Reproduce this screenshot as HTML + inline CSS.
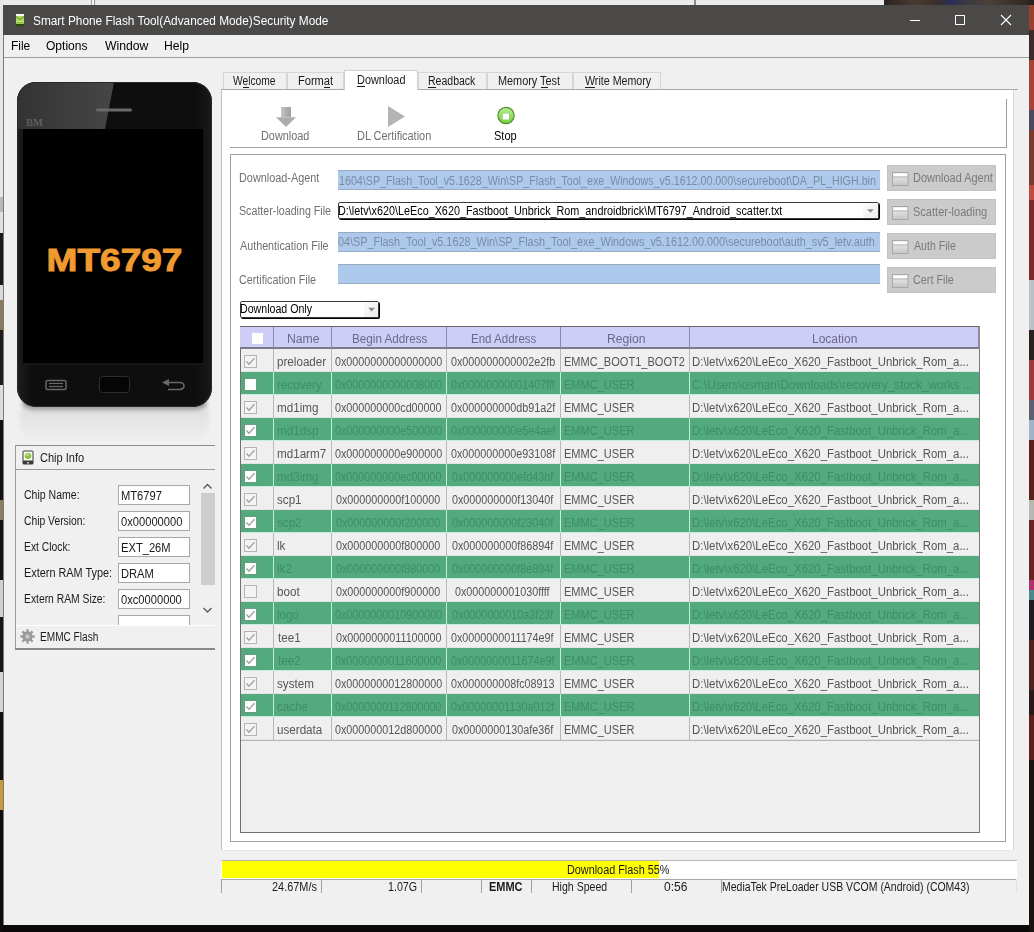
<!DOCTYPE html>
<html><head><meta charset="utf-8"><style>
html,body{margin:0;padding:0;width:1034px;height:932px;overflow:hidden;background:#000;}
body{position:relative;font-family:"Liberation Sans",sans-serif;}
.r{position:absolute;}
.t{position:absolute;white-space:nowrap;}
</style></head><body>
<div class="r" style="left:0px;top:0px;width:1034px;height:932px;background:#0a0808;"></div>
<div class="r" style="left:0px;top:0px;width:884px;height:5px;background:#ebebeb;"></div>
<div class="r" style="left:91px;top:0px;width:1px;height:5px;background:#a0a0a0;"></div>
<div class="r" style="left:92px;top:0px;width:2px;height:5px;background:#f8f8f8;"></div>
<div class="r" style="left:94px;top:0px;width:1px;height:5px;background:#909090;"></div>
<div class="r" style="left:694px;top:0px;width:2px;height:5px;background:#8a8a8a;"></div>
<div class="r" style="left:884px;top:0px;width:150px;height:5px;background:linear-gradient(90deg,#2a221e,#4a3a30 20%,#3a3028 35%,#28305a 45%,#3a3a40 55%,#4a4038 70%,#2a2420);"></div>
<div class="r" style="left:0px;top:0px;width:3px;height:197px;background:#e6e6e6;"></div>
<div class="r" style="left:0px;top:197px;width:3px;height:15px;background:#b8b8b8;"></div>
<div class="r" style="left:0px;top:212px;width:3px;height:21px;background:#e0e0e0;"></div>
<div class="r" style="left:0px;top:233px;width:3px;height:52px;background:#1a1a1a;"></div>
<div class="r" style="left:0px;top:285px;width:3px;height:15px;background:#d8d8d8;"></div>
<div class="r" style="left:0px;top:300px;width:3px;height:30px;background:#8a7a5a;"></div>
<div class="r" style="left:0px;top:330px;width:3px;height:55px;background:#201a18;"></div>
<div class="r" style="left:0px;top:385px;width:3px;height:35px;background:#dcdcdc;"></div>
<div class="r" style="left:0px;top:420px;width:3px;height:80px;background:#141010;"></div>
<div class="r" style="left:0px;top:500px;width:3px;height:20px;background:#8a8060;"></div>
<div class="r" style="left:0px;top:520px;width:3px;height:60px;background:#151212;"></div>
<div class="r" style="left:0px;top:580px;width:3px;height:37px;background:#d0d0d0;"></div>
<div class="r" style="left:0px;top:617px;width:3px;height:55px;background:#1a1616;"></div>
<div class="r" style="left:0px;top:672px;width:3px;height:40px;background:#d4d4d4;"></div>
<div class="r" style="left:0px;top:712px;width:3px;height:68px;background:#121010;"></div>
<div class="r" style="left:0px;top:780px;width:3px;height:30px;background:#c89a38;"></div>
<div class="r" style="left:0px;top:810px;width:3px;height:122px;background:#0e0c0c;"></div>
<div class="r" style="left:1029px;top:0px;width:5px;height:5px;background:#2a2020;"></div>
<div class="r" style="left:1029px;top:5px;width:5px;height:25px;background:#9a4030;"></div>
<div class="r" style="left:1029px;top:30px;width:5px;height:30px;background:#3a2a28;"></div>
<div class="r" style="left:1029px;top:60px;width:5px;height:50px;background:#a8403a;"></div>
<div class="r" style="left:1029px;top:110px;width:5px;height:20px;background:#4a4a58;"></div>
<div class="r" style="left:1029px;top:130px;width:5px;height:55px;background:#7a3a30;"></div>
<div class="r" style="left:1029px;top:185px;width:5px;height:15px;background:#c04a40;"></div>
<div class="r" style="left:1029px;top:200px;width:5px;height:80px;background:#7a2a2a;"></div>
<div class="r" style="left:1029px;top:280px;width:5px;height:50px;background:#b8c0c8;"></div>
<div class="r" style="left:1029px;top:330px;width:5px;height:30px;background:#2a2020;"></div>
<div class="r" style="left:1029px;top:360px;width:5px;height:40px;background:#9a3a3a;"></div>
<div class="r" style="left:1029px;top:400px;width:5px;height:20px;background:#5a6070;"></div>
<div class="r" style="left:1029px;top:420px;width:5px;height:20px;background:#a0b4c8;"></div>
<div class="r" style="left:1029px;top:440px;width:5px;height:60px;background:#5a2020;"></div>
<div class="r" style="left:1029px;top:500px;width:5px;height:20px;background:#b8b8b0;"></div>
<div class="r" style="left:1029px;top:520px;width:5px;height:60px;background:#6a2222;"></div>
<div class="r" style="left:1029px;top:580px;width:5px;height:10px;background:#b03068;"></div>
<div class="r" style="left:1029px;top:590px;width:5px;height:10px;background:#4a8a8a;"></div>
<div class="r" style="left:1029px;top:600px;width:5px;height:40px;background:#221a20;"></div>
<div class="r" style="left:1029px;top:640px;width:5px;height:50px;background:#4a2020;"></div>
<div class="r" style="left:1029px;top:690px;width:5px;height:25px;background:#2a1818;"></div>
<div class="r" style="left:1029px;top:715px;width:5px;height:45px;background:#5a2020;"></div>
<div class="r" style="left:1029px;top:760px;width:5px;height:172px;background:#1a1010;"></div>
<div class="r" style="left:3px;top:5px;width:1026px;height:920px;background:#f0f0f0;"></div>
<div class="r" style="left:3px;top:5px;width:1026px;height:30px;background:#4a4948;"></div>
<div class="r" style="left:3px;top:35px;width:1px;height:890px;background:#7a7a7a;"></div>
<svg class="r" style="left:15px;top:13px;width:11px;height:14px" viewBox="15 13 11 14"><rect x="16" y="22" width="8" height="4" fill="#2a4a08"/><rect x="16" y="14" width="8" height="10" fill="#a8d860"/><rect x="16" y="14" width="8" height="2" fill="#f4fff0"/><polyline points="16,16.5 20,19.5 24,16.5" fill="none" stroke="#7aa838" stroke-width="1.2"/><rect x="16" y="21" width="8" height="1" fill="#c4ec70"/><rect x="16" y="22.3" width="8" height="1" fill="#88b040"/></svg>
<div class="t" style="left:32.81px;top:14.54px;font-size:12px;line-height:12px;color:#ffffff;transform:scaleX(0.9873);transform-origin:0 0;">Smart Phone Flash Tool(Advanced Mode)Security Mode</div>
<svg class="r" style="left:900px;top:5px;width:129px;height:30px" viewBox="0 0 129 30"><line x1="10" y1="15.5" x2="20" y2="15.5" stroke="#fff" stroke-width="1"/><rect x="55.5" y="10.5" width="9" height="9" fill="none" stroke="#fff" stroke-width="1"/><line x1="101" y1="10" x2="111" y2="20" stroke="#fff" stroke-width="1.1"/><line x1="111" y1="10" x2="101" y2="20" stroke="#fff" stroke-width="1.1"/></svg>
<div class="t" style="left:11.44px;top:40.44px;font-size:12px;line-height:12px;color:#000;transform:scaleX(0.9955);transform-origin:0 0;">File</div>
<div class="t" style="left:46.42px;top:40.44px;font-size:12px;line-height:12px;color:#000;transform:scaleX(1.0035);transform-origin:0 0;">Options</div>
<div class="t" style="left:104.60px;top:40.44px;font-size:12px;line-height:12px;color:#000;transform:scaleX(1.0159);transform-origin:0 0;">Window</div>
<div class="t" style="left:164.03px;top:40.44px;font-size:12px;line-height:12px;color:#000;transform:scaleX(1.0137);transform-origin:0 0;">Help</div>
<div class="r" style="left:4px;top:57px;width:1025px;height:1px;background:#a0a0a0;"></div>
<svg class="r" style="left:10px;top:395px;width:210px;height:50px" viewBox="10 395 210 50"><defs><filter id="bl" x="-20%" y="-50%" width="140%" height="200%"><feGaussianBlur stdDeviation="2"/></filter><linearGradient id="rf" x1="0" y1="0" x2="0" y2="1"><stop offset="0" stop-color="#000" stop-opacity="0.07"/><stop offset="1" stop-color="#000" stop-opacity="0"/></linearGradient></defs><rect x="22" y="398" width="185" height="12" rx="12" fill="#000" opacity="0.35" filter="url(#bl)"/><path d="M20 410 H209 V420 Q209 442 187 442 H42 Q20 442 20 420 Z" fill="url(#rf)" filter="url(#bl)"/></svg>
<svg class="r" style="left:14px;top:78px;width:202px;height:336px" viewBox="14 78 202 336"><defs><linearGradient id="bd" x1="0" y1="0" x2="1" y2="0"><stop offset="0" stop-color="#1e1e1e"/><stop offset="0.08" stop-color="#0e0e0e"/><stop offset="0.92" stop-color="#0e0e0e"/><stop offset="1" stop-color="#1a1a1a"/></linearGradient><clipPath id="pc"><rect x="17" y="82" width="195" height="325" rx="19" ry="19"/></clipPath></defs><rect x="17" y="82" width="195" height="325" rx="19" ry="19" fill="url(#bd)"/><g clip-path="url(#pc)"><linearGradient id="gl" x1="0" y1="0" x2="1" y2="0"><stop offset="0" stop-color="#333"/><stop offset="1" stop-color="#464646"/></linearGradient><polygon points="17,82 114,82 105,129 17,129" fill="url(#gl)"/></g><rect x="17.5" y="82.5" width="194" height="324" rx="19" ry="19" fill="none" stroke="#2a2a2a" stroke-width="1"/><rect x="23" y="129" width="180" height="235" fill="#000"/><line x1="23" y1="364" x2="203" y2="364" stroke="#222" stroke-width="1"/><rect x="96" y="108.5" width="36" height="3" rx="1.5" fill="#6a6a6a"/><text x="26" y="126" font-family="Liberation Serif" font-size="10" font-weight="bold" fill="#5e5e5e" textLength="17" lengthAdjust="spacingAndGlyphs">BM</text><text x="46.5" y="271" font-family="Liberation Sans" font-weight="bold" font-size="31" fill="#f09a30" stroke="#f09a30" stroke-width="0.9" textLength="136" lengthAdjust="spacingAndGlyphs">MT6797</text><rect x="46" y="380.5" width="20" height="9" rx="1.5" fill="none" stroke="#6a6a6a" stroke-width="1.4"/><line x1="49" y1="383.5" x2="63" y2="383.5" stroke="#6a6a6a" stroke-width="1.2"/><line x1="49" y1="386.5" x2="63" y2="386.5" stroke="#6a6a6a" stroke-width="1.2"/><rect x="99.5" y="376.5" width="30" height="16" rx="3" fill="#050505" stroke="#2e2e2e" stroke-width="1"/><path d="M168 382.5 H180 a4 3.5 0 0 1 0 7 H168" fill="none" stroke="#6a6a6a" stroke-width="1.6"/><polygon points="162,382.5 169,379 169,386" fill="#6a6a6a"/></svg>
<div class="r" style="left:15px;top:445px;width:200px;height:1px;background:#8a8a8a;"></div>
<div class="r" style="left:15px;top:445px;width:1px;height:204px;background:#9a9a9a;"></div>
<div class="r" style="left:16px;top:469px;width:199px;height:1px;background:#9a9a9a;"></div>
<div class="r" style="left:16px;top:625px;width:199px;height:1px;background:#ffffff;"></div>
<div class="r" style="left:15px;top:648px;width:200px;height:2px;background:#8a8a8a;"></div>
<svg class="r" style="left:22px;top:450px;width:12px;height:15px" viewBox="0 0 12 15"><rect x="0.5" y="0.5" width="11" height="14" rx="1.5" fill="#3a3a3a"/><rect x="1.5" y="1.5" width="9" height="9" fill="#f4fff0"/><ellipse cx="6" cy="6" rx="3.3" ry="3" fill="#8cc040"/><ellipse cx="5.5" cy="5" rx="1.8" ry="1.4" fill="#b0dc70"/><rect x="5" y="12" width="2" height="1.5" fill="#ccc"/></svg>
<div class="t" style="left:40.20px;top:451.64px;font-size:12px;line-height:12px;color:#1a1a1a;transform:scaleX(0.9194);transform-origin:0 0;">Chip Info</div>
<div class="t" style="left:24.07px;top:488.84px;font-size:12px;line-height:12px;color:#1a1a1a;transform:scaleX(0.8771);transform-origin:0 0;">Chip Name:</div>
<div class="r" style="left:118px;top:485px;width:72px;height:20px;background:#fff;border:1px solid #a8a8a8;box-sizing:border-box;"></div>
<div class="t" style="left:120.61px;top:489.54px;font-size:12px;line-height:12px;color:#1a1a1a;transform:scaleX(0.9300);transform-origin:0 0;">MT6797</div>
<div class="t" style="left:24.08px;top:514.94px;font-size:12px;line-height:12px;color:#1a1a1a;transform:scaleX(0.8600);transform-origin:0 0;">Chip Version:</div>
<div class="r" style="left:118px;top:511px;width:72px;height:20px;background:#fff;border:1px solid #a8a8a8;box-sizing:border-box;"></div>
<div class="t" style="left:121.05px;top:515.64px;font-size:12px;line-height:12px;color:#1a1a1a;transform:scaleX(0.9300);transform-origin:0 0;">0x00000000</div>
<div class="t" style="left:23.77px;top:541.04px;font-size:12px;line-height:12px;color:#1a1a1a;transform:scaleX(0.8600);transform-origin:0 0;">Ext Clock:</div>
<div class="r" style="left:118px;top:537px;width:72px;height:20px;background:#fff;border:1px solid #a8a8a8;box-sizing:border-box;"></div>
<div class="t" style="left:120.61px;top:541.74px;font-size:12px;line-height:12px;color:#1a1a1a;transform:scaleX(0.9300);transform-origin:0 0;">EXT_26M</div>
<div class="t" style="left:23.73px;top:567.14px;font-size:12px;line-height:12px;color:#1a1a1a;transform:scaleX(0.9069);transform-origin:0 0;">Extern RAM Type:</div>
<div class="r" style="left:118px;top:563px;width:72px;height:20px;background:#fff;border:1px solid #a8a8a8;box-sizing:border-box;"></div>
<div class="t" style="left:120.61px;top:567.84px;font-size:12px;line-height:12px;color:#1a1a1a;transform:scaleX(0.9300);transform-origin:0 0;">DRAM</div>
<div class="t" style="left:23.77px;top:593.24px;font-size:12px;line-height:12px;color:#1a1a1a;transform:scaleX(0.8600);transform-origin:0 0;">Extern RAM Size:</div>
<div class="r" style="left:118px;top:589px;width:72px;height:20px;background:#fff;border:1px solid #a8a8a8;box-sizing:border-box;"></div>
<div class="t" style="left:121.05px;top:593.94px;font-size:12px;line-height:12px;color:#1a1a1a;transform:scaleX(0.9300);transform-origin:0 0;">0xc0000000</div>
<div class="r" style="left:118px;top:615px;width:72px;height:10px;background:#fff;border:1px solid #a8a8a8;border-bottom:none;box-sizing:border-box;"></div>
<div class="r" style="left:200px;top:477px;width:15px;height:148px;background:#f0f0f0;"></div>
<div class="r" style="left:200.5px;top:493px;width:14px;height:92px;background:#cdcdcd;"></div>
<svg class="r" style="left:200px;top:478px;width:15px;height:140px" viewBox="0 0 15 140"><polyline points="3.5,10.5 7.5,6.5 11.5,10.5" fill="none" stroke="#606060" stroke-width="1.5"/><polyline points="3.5,130 7.5,134 11.5,130" fill="none" stroke="#606060" stroke-width="1.5"/></svg>
<svg class="r" style="left:20px;top:629px;width:15px;height:15px" viewBox="0 0 15 15"><g fill="#9a9a9a"><circle cx="7.5" cy="7.5" r="5"/><rect x="6.3" y="0.3" width="2.4" height="3.5" transform="rotate(0 7.5 7.5)"/><rect x="6.3" y="0.3" width="2.4" height="3.5" transform="rotate(45 7.5 7.5)"/><rect x="6.3" y="0.3" width="2.4" height="3.5" transform="rotate(90 7.5 7.5)"/><rect x="6.3" y="0.3" width="2.4" height="3.5" transform="rotate(135 7.5 7.5)"/><rect x="6.3" y="0.3" width="2.4" height="3.5" transform="rotate(180 7.5 7.5)"/><rect x="6.3" y="0.3" width="2.4" height="3.5" transform="rotate(225 7.5 7.5)"/><rect x="6.3" y="0.3" width="2.4" height="3.5" transform="rotate(270 7.5 7.5)"/><rect x="6.3" y="0.3" width="2.4" height="3.5" transform="rotate(315 7.5 7.5)"/></g><circle cx="7.5" cy="7.5" r="2.2" fill="#c8c8c8"/></svg>
<div class="t" style="left:39.69px;top:630.64px;font-size:12px;line-height:12px;color:#1a1a1a;transform:scaleX(0.8407);transform-origin:0 0;">EMMC Flash</div>
<div class="r" style="left:221px;top:89px;width:793px;height:762px;background:#ffffff;"></div>
<div class="r" style="left:221px;top:89px;width:1px;height:762px;background:#c0c0c0;"></div>
<div class="r" style="left:1013px;top:89px;width:1px;height:762px;background:#d8d8d8;"></div>
<div class="r" style="left:221px;top:850px;width:793px;height:1px;background:#e8e8e8;"></div>
<div class="r" style="left:221px;top:89px;width:797px;height:1px;background:#a8a8a8;"></div>
<div class="r" style="left:223px;top:72px;width:64px;height:17px;background:#f0f0f0;border:1px solid #d6d6d6;border-bottom:none;box-sizing:border-box;"></div>
<div class="t" style="left:233.00px;top:75.24px;font-size:12px;line-height:12px;color:#1a1a1a;transform:scaleX(0.8537);transform-origin:0 0;">Welcome</div>
<div class="r" style="left:243px;top:87px;width:6px;height:1px;background:#1a1a1a;"></div>
<div class="r" style="left:287px;top:72px;width:57px;height:17px;background:#f0f0f0;border:1px solid #d6d6d6;border-bottom:none;box-sizing:border-box;"></div>
<div class="t" style="left:298.41px;top:75.24px;font-size:12px;line-height:12px;color:#1a1a1a;transform:scaleX(0.9226);transform-origin:0 0;">Format</div>
<div class="r" style="left:324px;top:87px;width:6px;height:1px;background:#1a1a1a;"></div>
<div class="r" style="left:344px;top:70px;width:74px;height:20px;background:#fff;border:1px solid #d0d0d0;border-bottom:none;box-sizing:border-box;"></div>
<div class="t" style="left:356.53px;top:74.24px;font-size:12px;line-height:12px;color:#1a1a1a;transform:scaleX(0.9089);transform-origin:0 0;">Download</div>
<div class="r" style="left:357px;top:86px;width:8px;height:1px;background:#1a1a1a;"></div>
<div class="r" style="left:418px;top:72px;width:69px;height:17px;background:#f0f0f0;border:1px solid #d6d6d6;border-bottom:none;box-sizing:border-box;"></div>
<div class="t" style="left:428.06px;top:75.24px;font-size:12px;line-height:12px;color:#1a1a1a;transform:scaleX(0.8767);transform-origin:0 0;">Readback</div>
<div class="r" style="left:428px;top:87px;width:8px;height:1px;background:#1a1a1a;"></div>
<div class="r" style="left:487px;top:72px;width:86px;height:17px;background:#f0f0f0;border:1px solid #d6d6d6;border-bottom:none;box-sizing:border-box;"></div>
<div class="t" style="left:498.43px;top:75.24px;font-size:12px;line-height:12px;color:#1a1a1a;transform:scaleX(0.9060);transform-origin:0 0;">Memory Test</div>
<div class="r" style="left:541px;top:87px;width:7px;height:1px;background:#1a1a1a;"></div>
<div class="r" style="left:573px;top:72px;width:88px;height:17px;background:#f0f0f0;border:1px solid #d6d6d6;border-bottom:none;box-sizing:border-box;"></div>
<div class="t" style="left:584.80px;top:75.24px;font-size:12px;line-height:12px;color:#1a1a1a;transform:scaleX(0.8884);transform-origin:0 0;">Write Memory</div>
<div class="r" style="left:585px;top:87px;width:10px;height:1px;background:#1a1a1a;"></div>
<div class="r" style="left:230px;top:147px;width:777px;height:1px;background:#a0a0a0;"></div>
<div class="r" style="left:1006px;top:99px;width:1px;height:49px;background:#a0a0a0;"></div>
<svg class="r" style="left:270px;top:100px;width:260px;height:30px" viewBox="270 100 260 30"><defs><linearGradient id="ag" x1="0" y1="0" x2="1" y2="0"><stop offset="0" stop-color="#c8c8c8"/><stop offset="0.5" stop-color="#b0b0b0"/><stop offset="1" stop-color="#a0a0a0"/></linearGradient></defs><rect x="281" y="107" width="10" height="10" fill="url(#ag)"/><polygon points="276,117.3 296,117.3 286,127" fill="#acacac"/><polygon points="388,106 405,116.5 388,127" fill="#b4b4b4"/><linearGradient id="sg" x1="0" y1="0" x2="0" y2="1"><stop offset="0" stop-color="#b4ec90"/><stop offset="1" stop-color="#7cd040"/></linearGradient><circle cx="506" cy="115.5" r="8.7" fill="#4a8e2a"/><circle cx="506" cy="115.5" r="7.6" fill="url(#sg)"/><rect x="502.3" y="113" width="7.2" height="6.8" fill="#4a8e2a" opacity="0.5"/><rect x="502.6" y="113.4" width="6.6" height="6.2" fill="#ffffff"/></svg>
<div class="t" style="left:260.53px;top:130.34px;font-size:12px;line-height:12px;color:#707070;transform:scaleX(0.9070);transform-origin:0 0;">Download</div>
<div class="t" style="left:357.43px;top:130.44px;font-size:12px;line-height:12px;color:#707070;transform:scaleX(0.9098);transform-origin:0 0;">DL Certification</div>
<div class="t" style="left:494.05px;top:129.84px;font-size:12px;line-height:12px;color:#000000;transform:scaleX(0.9179);transform-origin:0 0;">Stop</div>
<div class="r" style="left:230px;top:154px;width:776px;height:1px;background:#a0a0a0;"></div>
<div class="r" style="left:230px;top:154px;width:1px;height:687px;background:#a0a0a0;"></div>
<div class="r" style="left:1005px;top:154px;width:1px;height:687px;background:#a0a0a0;"></div>
<div class="r" style="left:230px;top:841px;width:776px;height:1px;background:#a0a0a0;"></div>
<div class="t" style="left:239.13px;top:171.74px;font-size:12px;line-height:12px;color:#707070;transform:scaleX(0.9052);transform-origin:0 0;">Download-Agent</div>
<div class="t" style="left:239.47px;top:205.44px;font-size:12px;line-height:12px;color:#707070;transform:scaleX(0.8901);transform-origin:0 0;">Scatter-loading File</div>
<div class="t" style="left:240.00px;top:239.54px;font-size:12px;line-height:12px;color:#707070;transform:scaleX(0.8965);transform-origin:0 0;">Authentication File</div>
<div class="t" style="left:239.46px;top:273.84px;font-size:12px;line-height:12px;color:#707070;transform:scaleX(0.8958);transform-origin:0 0;">Certification File</div>
<div class="r" style="left:338px;top:170px;width:542px;height:20px;background:#adcaec;border-top:1px solid #9aaac0;border-bottom:1px solid #9aaac0;box-sizing:border-box;"></div>
<div class="r" style="left:338px;top:232px;width:542px;height:20px;background:#adcaec;border-top:1px solid #9aaac0;border-bottom:1px solid #9aaac0;box-sizing:border-box;"></div>
<div class="r" style="left:338px;top:264px;width:542px;height:20px;background:#adcaec;border-top:1px solid #9aaac0;border-bottom:1px solid #9aaac0;box-sizing:border-box;"></div>
<div class="r" style="left:338px;top:170px;width:542px;height:20px;overflow:hidden">
<div class="t" style="left:1.35px;top:4.74px;font-size:12px;line-height:12px;color:#7a8ca4;transform:scaleX(0.8913);transform-origin:0 0;">1604\SP_Flash_Tool_v5.1628_Win\SP_Flash_Tool_exe_Windows_v5.1612.00.000\secureboot\DA_PL_HIGH.bin</div>
</div>
<div class="r" style="left:338px;top:232px;width:542px;height:20px;overflow:hidden">
<div class="t" style="left:-0.43px;top:4.34px;font-size:12px;line-height:12px;color:#7a8ca4;transform:scaleX(0.9024);transform-origin:0 0;">04\SP_Flash_Tool_v5.1628_Win\SP_Flash_Tool_exe_Windows_v5.1612.00.000\secureboot\auth_sv5_letv.auth</div>
</div>
<div class="r" style="left:338px;top:202px;width:541px;height:17px;background:#fff;border:1px solid #3a3a3a;border-radius:2px;box-sizing:border-box;box-shadow:1px 1px 0 #000;"></div>
<div class="r" style="left:863px;top:203px;width:15px;height:15px;background:linear-gradient(135deg,#fcfcfc,#ececec);"></div>
<svg class="r" style="left:863px;top:203px;width:15px;height:15px" viewBox="0 0 15 15"><polygon points="4,6.2 10.8,6.2 7.4,9.8" fill="#8a8a8a"/></svg>
<div class="r" style="left:339px;top:203px;width:522px;height:16px;overflow:hidden">
<div class="t" style="left:-0.86px;top:1.84px;font-size:12px;line-height:12px;color:#000;transform:scaleX(0.9001);transform-origin:0 0;">D:\letv\x620\LeEco_X620_Fastboot_Unbrick_Rom_androidbrick\MT6797_Android_scatter.txt</div>
</div>
<div class="r" style="left:887px;top:165px;width:109px;height:26px;background:#cbcbcb;border:1px solid #c2c2c2;box-sizing:border-box;"></div>
<svg class="r" style="left:892px;top:172px;width:17px;height:14px" viewBox="0 0 17 14"><defs><linearGradient id="fg" x1="0" y1="0" x2="0" y2="1"><stop offset="0" stop-color="#f4f4f4"/><stop offset="1" stop-color="#c4c4c4"/></linearGradient></defs><rect x="0.5" y="0.5" width="15.5" height="13" fill="url(#fg)" stroke="#a8a8a8" stroke-width="1"/><rect x="1.5" y="2" width="13.5" height="2.2" fill="#fff"/><line x1="1" y1="5" x2="16" y2="5" stroke="#b4b4b4" stroke-width="1"/></svg>
<div class="t" style="left:912.62px;top:172.04px;font-size:12px;line-height:12px;color:#7a7a7a;transform:scaleX(0.9132);transform-origin:0 0;">Download Agent</div>
<div class="r" style="left:887px;top:199px;width:109px;height:26px;background:#cbcbcb;border:1px solid #c2c2c2;box-sizing:border-box;"></div>
<svg class="r" style="left:892px;top:206px;width:17px;height:14px" viewBox="0 0 17 14"><defs><linearGradient id="fg" x1="0" y1="0" x2="0" y2="1"><stop offset="0" stop-color="#f4f4f4"/><stop offset="1" stop-color="#c4c4c4"/></linearGradient></defs><rect x="0.5" y="0.5" width="15.5" height="13" fill="url(#fg)" stroke="#a8a8a8" stroke-width="1"/><rect x="1.5" y="2" width="13.5" height="2.2" fill="#fff"/><line x1="1" y1="5" x2="16" y2="5" stroke="#b4b4b4" stroke-width="1"/></svg>
<div class="t" style="left:912.95px;top:206.04px;font-size:12px;line-height:12px;color:#7a7a7a;transform:scaleX(0.9191);transform-origin:0 0;">Scatter-loading</div>
<div class="r" style="left:887px;top:233px;width:109px;height:26px;background:#cbcbcb;border:1px solid #c2c2c2;box-sizing:border-box;"></div>
<svg class="r" style="left:892px;top:240px;width:17px;height:14px" viewBox="0 0 17 14"><defs><linearGradient id="fg" x1="0" y1="0" x2="0" y2="1"><stop offset="0" stop-color="#f4f4f4"/><stop offset="1" stop-color="#c4c4c4"/></linearGradient></defs><rect x="0.5" y="0.5" width="15.5" height="13" fill="url(#fg)" stroke="#a8a8a8" stroke-width="1"/><rect x="1.5" y="2" width="13.5" height="2.2" fill="#fff"/><line x1="1" y1="5" x2="16" y2="5" stroke="#b4b4b4" stroke-width="1"/></svg>
<div class="t" style="left:913.50px;top:240.04px;font-size:12px;line-height:12px;color:#7a7a7a;transform:scaleX(0.8825);transform-origin:0 0;">Auth File</div>
<div class="r" style="left:887px;top:267px;width:109px;height:26px;background:#cbcbcb;border:1px solid #c2c2c2;box-sizing:border-box;"></div>
<svg class="r" style="left:892px;top:274px;width:17px;height:14px" viewBox="0 0 17 14"><defs><linearGradient id="fg" x1="0" y1="0" x2="0" y2="1"><stop offset="0" stop-color="#f4f4f4"/><stop offset="1" stop-color="#c4c4c4"/></linearGradient></defs><rect x="0.5" y="0.5" width="15.5" height="13" fill="url(#fg)" stroke="#a8a8a8" stroke-width="1"/><rect x="1.5" y="2" width="13.5" height="2.2" fill="#fff"/><line x1="1" y1="5" x2="16" y2="5" stroke="#b4b4b4" stroke-width="1"/></svg>
<div class="t" style="left:912.96px;top:274.04px;font-size:12px;line-height:12px;color:#7a7a7a;transform:scaleX(0.9013);transform-origin:0 0;">Cert File</div>
<div class="r" style="left:240px;top:301px;width:139px;height:17px;background:#fff;border:1px solid #3a3a3a;border-radius:2px;box-sizing:border-box;box-shadow:1px 1px 0 #000;"></div>
<div class="r" style="left:364px;top:302px;width:14px;height:15px;background:linear-gradient(135deg,#fcfcfc,#ececec);"></div>
<svg class="r" style="left:364px;top:302px;width:14px;height:15px" viewBox="0 0 14 15"><polygon points="4.2,5.8 11,5.8 7.6,9.4" fill="#8a8a8a"/></svg>
<div class="t" style="left:239.95px;top:303.44px;font-size:12px;line-height:12px;color:#000;transform:scaleX(0.8843);transform-origin:0 0;">Download Only</div>
<div class="r" style="left:240px;top:326px;width:740px;height:507px;background:#efefef;"></div>
<div class="r" style="left:240px;top:326px;width:1px;height:507px;background:#707070;"></div>
<div class="r" style="left:240px;top:832px;width:740px;height:1px;background:#707070;"></div>
<div class="r" style="left:979px;top:349px;width:1px;height:484px;background:#787878;"></div>
<div class="r" style="left:240px;top:326px;width:740px;height:23px;background:#cdcdf7;border-top:1px solid #6a6a6a;border-bottom:2px solid #7a7a8a;border-right:2px solid #8a8a9a;box-sizing:border-box;"></div>
<div class="r" style="left:273px;top:327px;width:1px;height:21px;background:#8a8aa8;"></div>
<div class="r" style="left:331px;top:327px;width:1px;height:21px;background:#8a8aa8;"></div>
<div class="r" style="left:446px;top:327px;width:1px;height:21px;background:#8a8aa8;"></div>
<div class="r" style="left:560px;top:327px;width:1px;height:21px;background:#8a8aa8;"></div>
<div class="r" style="left:689px;top:327px;width:1px;height:21px;background:#8a8aa8;"></div>
<div class="r" style="left:252px;top:333px;width:11px;height:11px;background:#fff;"></div>
<div class="t" style="left:286.72px;top:332.74px;font-size:12px;line-height:12px;color:#6a6a88;transform:scaleX(1.0171);transform-origin:0 0;">Name</div>
<div class="t" style="left:351.66px;top:332.74px;font-size:12px;line-height:12px;color:#6a6a88;transform:scaleX(0.9753);transform-origin:0 0;">Begin Address</div>
<div class="t" style="left:471.08px;top:332.74px;font-size:12px;line-height:12px;color:#6a6a88;transform:scaleX(0.9607);transform-origin:0 0;">End Address</div>
<div class="t" style="left:606.53px;top:332.74px;font-size:12px;line-height:12px;color:#6a6a88;transform:scaleX(1.0099);transform-origin:0 0;">Region</div>
<div class="t" style="left:811.94px;top:332.74px;font-size:12px;line-height:12px;color:#6a6a88;transform:scaleX(0.9986);transform-origin:0 0;">Location</div>
<div class="r" style="left:241px;top:349px;width:738px;height:23px;background:#efefef;border-bottom:1px solid #e4e4e4;box-sizing:border-box;"></div>
<div class="r" style="left:273px;top:349px;width:1px;height:23px;background:#b8b8b8;"></div>
<div class="r" style="left:331px;top:349px;width:1px;height:23px;background:#b8b8b8;"></div>
<div class="r" style="left:446px;top:349px;width:1px;height:23px;background:#b8b8b8;"></div>
<div class="r" style="left:560px;top:349px;width:1px;height:23px;background:#b8b8b8;"></div>
<div class="r" style="left:689px;top:349px;width:1px;height:23px;background:#b8b8b8;"></div>
<div class="r" style="left:244px;top:355px;width:13px;height:13px;background:#f4f4f4;border:1px solid #b4b4b4;box-sizing:border-box;"></div>
<svg class="r" style="left:244px;top:355px;width:13px;height:13px" viewBox="0 0 13 13"><polyline points="2.5,6.5 5,9.3 10.5,3.2" fill="none" stroke="#a0a0a0" stroke-width="1.3"/></svg>
<div class="t" style="left:277.00px;top:355.84px;font-size:12px;line-height:12px;color:#555555;transform:scaleX(0.9700);transform-origin:0 0;">preloader</div>
<div class="t" style="left:334.90px;top:355.84px;font-size:12px;line-height:12px;color:#555555;transform:scaleX(0.8970);transform-origin:0 0;">0x0000000000000000</div>
<div class="t" style="left:450.90px;top:355.84px;font-size:12px;line-height:12px;color:#555555;transform:scaleX(0.8970);transform-origin:0 0;">0x000000000002e2fb</div>
<div class="t" style="left:563.72px;top:355.84px;font-size:12px;line-height:12px;color:#555555;transform:scaleX(0.9200);transform-origin:0 0;">EMMC_BOOT1_BOOT2</div>
<div class="t" style="left:692.09px;top:355.84px;font-size:12px;line-height:12px;color:#555555;transform:scaleX(0.9501);transform-origin:0 0;">D:\letv\x620\LeEco_X620_Fastboot_Unbrick_Rom_a...</div>
<div class="r" style="left:241px;top:372px;width:738px;height:23px;background:#52aa7d;border-bottom:1px solid #c4f0da;box-sizing:border-box;"></div>
<div class="r" style="left:273px;top:372px;width:1px;height:23px;background:#bdf0d6;"></div>
<div class="r" style="left:331px;top:372px;width:1px;height:23px;background:#bdf0d6;"></div>
<div class="r" style="left:446px;top:372px;width:1px;height:23px;background:#bdf0d6;"></div>
<div class="r" style="left:560px;top:372px;width:1px;height:23px;background:#bdf0d6;"></div>
<div class="r" style="left:689px;top:372px;width:1px;height:23px;background:#bdf0d6;"></div>
<div class="r" style="left:244px;top:378px;width:13px;height:13px;background:#fafefc;border:1px solid #6a9a80;box-sizing:border-box;"></div>
<div class="t" style="left:277.00px;top:378.84px;font-size:12px;line-height:12px;color:#3f8e64;transform:scaleX(0.9700);transform-origin:0 0;">recovery</div>
<div class="t" style="left:334.90px;top:378.84px;font-size:12px;line-height:12px;color:#3f8e64;transform:scaleX(0.8970);transform-origin:0 0;">0x0000000000008000</div>
<div class="t" style="left:450.90px;top:378.84px;font-size:12px;line-height:12px;color:#3f8e64;transform:scaleX(0.8970);transform-origin:0 0;">0x00000000001407fff</div>
<div class="t" style="left:563.72px;top:378.84px;font-size:12px;line-height:12px;color:#3f8e64;transform:scaleX(0.9200);transform-origin:0 0;">EMMC_USER</div>
<div class="t" style="left:692.41px;top:378.84px;font-size:12px;line-height:12px;color:#3f8e64;transform:scaleX(0.9877);transform-origin:0 0;">C:\Users\osman\Downloads\recovery_stock_works ...</div>
<div class="r" style="left:241px;top:395px;width:738px;height:23px;background:#efefef;border-bottom:1px solid #e4e4e4;box-sizing:border-box;"></div>
<div class="r" style="left:273px;top:395px;width:1px;height:23px;background:#b8b8b8;"></div>
<div class="r" style="left:331px;top:395px;width:1px;height:23px;background:#b8b8b8;"></div>
<div class="r" style="left:446px;top:395px;width:1px;height:23px;background:#b8b8b8;"></div>
<div class="r" style="left:560px;top:395px;width:1px;height:23px;background:#b8b8b8;"></div>
<div class="r" style="left:689px;top:395px;width:1px;height:23px;background:#b8b8b8;"></div>
<div class="r" style="left:244px;top:401px;width:13px;height:13px;background:#f4f4f4;border:1px solid #b4b4b4;box-sizing:border-box;"></div>
<svg class="r" style="left:244px;top:401px;width:13px;height:13px" viewBox="0 0 13 13"><polyline points="2.5,6.5 5,9.3 10.5,3.2" fill="none" stroke="#a0a0a0" stroke-width="1.3"/></svg>
<div class="t" style="left:277.00px;top:401.84px;font-size:12px;line-height:12px;color:#555555;transform:scaleX(0.9700);transform-origin:0 0;">md1img</div>
<div class="t" style="left:335.22px;top:401.84px;font-size:12px;line-height:12px;color:#555555;transform:scaleX(0.8970);transform-origin:0 0;">0x000000000cd00000</div>
<div class="t" style="left:450.69px;top:401.84px;font-size:12px;line-height:12px;color:#555555;transform:scaleX(0.8970);transform-origin:0 0;">0x000000000db91a2f</div>
<div class="t" style="left:563.72px;top:401.84px;font-size:12px;line-height:12px;color:#555555;transform:scaleX(0.9200);transform-origin:0 0;">EMMC_USER</div>
<div class="t" style="left:692.09px;top:401.84px;font-size:12px;line-height:12px;color:#555555;transform:scaleX(0.9501);transform-origin:0 0;">D:\letv\x620\LeEco_X620_Fastboot_Unbrick_Rom_a...</div>
<div class="r" style="left:241px;top:418px;width:738px;height:23px;background:#52aa7d;border-bottom:1px solid #c4f0da;box-sizing:border-box;"></div>
<div class="r" style="left:273px;top:418px;width:1px;height:23px;background:#bdf0d6;"></div>
<div class="r" style="left:331px;top:418px;width:1px;height:23px;background:#bdf0d6;"></div>
<div class="r" style="left:446px;top:418px;width:1px;height:23px;background:#bdf0d6;"></div>
<div class="r" style="left:560px;top:418px;width:1px;height:23px;background:#bdf0d6;"></div>
<div class="r" style="left:689px;top:418px;width:1px;height:23px;background:#bdf0d6;"></div>
<div class="r" style="left:244px;top:424px;width:13px;height:13px;background:#fafefc;border:1px solid #6a9a80;box-sizing:border-box;"></div>
<svg class="r" style="left:244px;top:424px;width:13px;height:13px" viewBox="0 0 13 13"><polyline points="2.5,6.5 5,9.3 10.5,3.2" fill="none" stroke="#a0a0a0" stroke-width="1.3"/></svg>
<div class="t" style="left:277.00px;top:424.84px;font-size:12px;line-height:12px;color:#3f8e64;transform:scaleX(0.9700);transform-origin:0 0;">md1dsp</div>
<div class="t" style="left:334.90px;top:424.84px;font-size:12px;line-height:12px;color:#3f8e64;transform:scaleX(0.8970);transform-origin:0 0;">0x000000000e500000</div>
<div class="t" style="left:450.69px;top:424.84px;font-size:12px;line-height:12px;color:#3f8e64;transform:scaleX(0.8970);transform-origin:0 0;">0x000000000e5e4aef</div>
<div class="t" style="left:563.72px;top:424.84px;font-size:12px;line-height:12px;color:#3f8e64;transform:scaleX(0.9200);transform-origin:0 0;">EMMC_USER</div>
<div class="t" style="left:692.09px;top:424.84px;font-size:12px;line-height:12px;color:#3f8e64;transform:scaleX(0.9501);transform-origin:0 0;">D:\letv\x620\LeEco_X620_Fastboot_Unbrick_Rom_a...</div>
<div class="r" style="left:241px;top:441px;width:738px;height:23px;background:#efefef;border-bottom:1px solid #e4e4e4;box-sizing:border-box;"></div>
<div class="r" style="left:273px;top:441px;width:1px;height:23px;background:#b8b8b8;"></div>
<div class="r" style="left:331px;top:441px;width:1px;height:23px;background:#b8b8b8;"></div>
<div class="r" style="left:446px;top:441px;width:1px;height:23px;background:#b8b8b8;"></div>
<div class="r" style="left:560px;top:441px;width:1px;height:23px;background:#b8b8b8;"></div>
<div class="r" style="left:689px;top:441px;width:1px;height:23px;background:#b8b8b8;"></div>
<div class="r" style="left:244px;top:447px;width:13px;height:13px;background:#f4f4f4;border:1px solid #b4b4b4;box-sizing:border-box;"></div>
<svg class="r" style="left:244px;top:447px;width:13px;height:13px" viewBox="0 0 13 13"><polyline points="2.5,6.5 5,9.3 10.5,3.2" fill="none" stroke="#a0a0a0" stroke-width="1.3"/></svg>
<div class="t" style="left:277.00px;top:447.84px;font-size:12px;line-height:12px;color:#555555;transform:scaleX(0.9700);transform-origin:0 0;">md1arm7</div>
<div class="t" style="left:334.90px;top:447.84px;font-size:12px;line-height:12px;color:#555555;transform:scaleX(0.8970);transform-origin:0 0;">0x000000000e900000</div>
<div class="t" style="left:450.69px;top:447.84px;font-size:12px;line-height:12px;color:#555555;transform:scaleX(0.8970);transform-origin:0 0;">0x000000000e93108f</div>
<div class="t" style="left:563.72px;top:447.84px;font-size:12px;line-height:12px;color:#555555;transform:scaleX(0.9200);transform-origin:0 0;">EMMC_USER</div>
<div class="t" style="left:692.09px;top:447.84px;font-size:12px;line-height:12px;color:#555555;transform:scaleX(0.9501);transform-origin:0 0;">D:\letv\x620\LeEco_X620_Fastboot_Unbrick_Rom_a...</div>
<div class="r" style="left:241px;top:464px;width:738px;height:23px;background:#52aa7d;border-bottom:1px solid #c4f0da;box-sizing:border-box;"></div>
<div class="r" style="left:273px;top:464px;width:1px;height:23px;background:#bdf0d6;"></div>
<div class="r" style="left:331px;top:464px;width:1px;height:23px;background:#bdf0d6;"></div>
<div class="r" style="left:446px;top:464px;width:1px;height:23px;background:#bdf0d6;"></div>
<div class="r" style="left:560px;top:464px;width:1px;height:23px;background:#bdf0d6;"></div>
<div class="r" style="left:689px;top:464px;width:1px;height:23px;background:#bdf0d6;"></div>
<div class="r" style="left:244px;top:470px;width:13px;height:13px;background:#fafefc;border:1px solid #6a9a80;box-sizing:border-box;"></div>
<svg class="r" style="left:244px;top:470px;width:13px;height:13px" viewBox="0 0 13 13"><polyline points="2.5,6.5 5,9.3 10.5,3.2" fill="none" stroke="#a0a0a0" stroke-width="1.3"/></svg>
<div class="t" style="left:277.00px;top:470.84px;font-size:12px;line-height:12px;color:#3f8e64;transform:scaleX(0.9700);transform-origin:0 0;">md3img</div>
<div class="t" style="left:335.22px;top:470.84px;font-size:12px;line-height:12px;color:#3f8e64;transform:scaleX(0.8970);transform-origin:0 0;">0x000000000ec00000</div>
<div class="t" style="left:452.19px;top:470.84px;font-size:12px;line-height:12px;color:#3f8e64;transform:scaleX(0.8970);transform-origin:0 0;">0x000000000efd43bf</div>
<div class="t" style="left:563.72px;top:470.84px;font-size:12px;line-height:12px;color:#3f8e64;transform:scaleX(0.9200);transform-origin:0 0;">EMMC_USER</div>
<div class="t" style="left:692.09px;top:470.84px;font-size:12px;line-height:12px;color:#3f8e64;transform:scaleX(0.9501);transform-origin:0 0;">D:\letv\x620\LeEco_X620_Fastboot_Unbrick_Rom_a...</div>
<div class="r" style="left:241px;top:487px;width:738px;height:23px;background:#efefef;border-bottom:1px solid #e4e4e4;box-sizing:border-box;"></div>
<div class="r" style="left:273px;top:487px;width:1px;height:23px;background:#b8b8b8;"></div>
<div class="r" style="left:331px;top:487px;width:1px;height:23px;background:#b8b8b8;"></div>
<div class="r" style="left:446px;top:487px;width:1px;height:23px;background:#b8b8b8;"></div>
<div class="r" style="left:560px;top:487px;width:1px;height:23px;background:#b8b8b8;"></div>
<div class="r" style="left:689px;top:487px;width:1px;height:23px;background:#b8b8b8;"></div>
<div class="r" style="left:244px;top:493px;width:13px;height:13px;background:#f4f4f4;border:1px solid #b4b4b4;box-sizing:border-box;"></div>
<svg class="r" style="left:244px;top:493px;width:13px;height:13px" viewBox="0 0 13 13"><polyline points="2.5,6.5 5,9.3 10.5,3.2" fill="none" stroke="#a0a0a0" stroke-width="1.3"/></svg>
<div class="t" style="left:277.35px;top:493.84px;font-size:12px;line-height:12px;color:#555555;transform:scaleX(0.9700);transform-origin:0 0;">scp1</div>
<div class="t" style="left:336.40px;top:493.84px;font-size:12px;line-height:12px;color:#555555;transform:scaleX(0.8970);transform-origin:0 0;">0x000000000f100000</div>
<div class="t" style="left:452.19px;top:493.84px;font-size:12px;line-height:12px;color:#555555;transform:scaleX(0.8970);transform-origin:0 0;">0x000000000f13040f</div>
<div class="t" style="left:563.72px;top:493.84px;font-size:12px;line-height:12px;color:#555555;transform:scaleX(0.9200);transform-origin:0 0;">EMMC_USER</div>
<div class="t" style="left:692.09px;top:493.84px;font-size:12px;line-height:12px;color:#555555;transform:scaleX(0.9501);transform-origin:0 0;">D:\letv\x620\LeEco_X620_Fastboot_Unbrick_Rom_a...</div>
<div class="r" style="left:241px;top:510px;width:738px;height:23px;background:#52aa7d;border-bottom:1px solid #c4f0da;box-sizing:border-box;"></div>
<div class="r" style="left:273px;top:510px;width:1px;height:23px;background:#bdf0d6;"></div>
<div class="r" style="left:331px;top:510px;width:1px;height:23px;background:#bdf0d6;"></div>
<div class="r" style="left:446px;top:510px;width:1px;height:23px;background:#bdf0d6;"></div>
<div class="r" style="left:560px;top:510px;width:1px;height:23px;background:#bdf0d6;"></div>
<div class="r" style="left:689px;top:510px;width:1px;height:23px;background:#bdf0d6;"></div>
<div class="r" style="left:244px;top:516px;width:13px;height:13px;background:#fafefc;border:1px solid #6a9a80;box-sizing:border-box;"></div>
<svg class="r" style="left:244px;top:516px;width:13px;height:13px" viewBox="0 0 13 13"><polyline points="2.5,6.5 5,9.3 10.5,3.2" fill="none" stroke="#a0a0a0" stroke-width="1.3"/></svg>
<div class="t" style="left:277.35px;top:516.84px;font-size:12px;line-height:12px;color:#3f8e64;transform:scaleX(0.9700);transform-origin:0 0;">scp2</div>
<div class="t" style="left:336.40px;top:516.84px;font-size:12px;line-height:12px;color:#3f8e64;transform:scaleX(0.8970);transform-origin:0 0;">0x000000000f200000</div>
<div class="t" style="left:452.19px;top:516.84px;font-size:12px;line-height:12px;color:#3f8e64;transform:scaleX(0.8970);transform-origin:0 0;">0x000000000f23040f</div>
<div class="t" style="left:563.72px;top:516.84px;font-size:12px;line-height:12px;color:#3f8e64;transform:scaleX(0.9200);transform-origin:0 0;">EMMC_USER</div>
<div class="t" style="left:692.09px;top:516.84px;font-size:12px;line-height:12px;color:#3f8e64;transform:scaleX(0.9501);transform-origin:0 0;">D:\letv\x620\LeEco_X620_Fastboot_Unbrick_Rom_a...</div>
<div class="r" style="left:241px;top:533px;width:738px;height:23px;background:#efefef;border-bottom:1px solid #e4e4e4;box-sizing:border-box;"></div>
<div class="r" style="left:273px;top:533px;width:1px;height:23px;background:#b8b8b8;"></div>
<div class="r" style="left:331px;top:533px;width:1px;height:23px;background:#b8b8b8;"></div>
<div class="r" style="left:446px;top:533px;width:1px;height:23px;background:#b8b8b8;"></div>
<div class="r" style="left:560px;top:533px;width:1px;height:23px;background:#b8b8b8;"></div>
<div class="r" style="left:689px;top:533px;width:1px;height:23px;background:#b8b8b8;"></div>
<div class="r" style="left:244px;top:539px;width:13px;height:13px;background:#f4f4f4;border:1px solid #b4b4b4;box-sizing:border-box;"></div>
<svg class="r" style="left:244px;top:539px;width:13px;height:13px" viewBox="0 0 13 13"><polyline points="2.5,6.5 5,9.3 10.5,3.2" fill="none" stroke="#a0a0a0" stroke-width="1.3"/></svg>
<div class="t" style="left:277.00px;top:539.84px;font-size:12px;line-height:12px;color:#555555;transform:scaleX(0.9700);transform-origin:0 0;">lk</div>
<div class="t" style="left:336.40px;top:539.84px;font-size:12px;line-height:12px;color:#555555;transform:scaleX(0.8970);transform-origin:0 0;">0x000000000f800000</div>
<div class="t" style="left:452.19px;top:539.84px;font-size:12px;line-height:12px;color:#555555;transform:scaleX(0.8970);transform-origin:0 0;">0x000000000f86894f</div>
<div class="t" style="left:563.72px;top:539.84px;font-size:12px;line-height:12px;color:#555555;transform:scaleX(0.9200);transform-origin:0 0;">EMMC_USER</div>
<div class="t" style="left:692.09px;top:539.84px;font-size:12px;line-height:12px;color:#555555;transform:scaleX(0.9501);transform-origin:0 0;">D:\letv\x620\LeEco_X620_Fastboot_Unbrick_Rom_a...</div>
<div class="r" style="left:241px;top:556px;width:738px;height:23px;background:#52aa7d;border-bottom:1px solid #c4f0da;box-sizing:border-box;"></div>
<div class="r" style="left:273px;top:556px;width:1px;height:23px;background:#bdf0d6;"></div>
<div class="r" style="left:331px;top:556px;width:1px;height:23px;background:#bdf0d6;"></div>
<div class="r" style="left:446px;top:556px;width:1px;height:23px;background:#bdf0d6;"></div>
<div class="r" style="left:560px;top:556px;width:1px;height:23px;background:#bdf0d6;"></div>
<div class="r" style="left:689px;top:556px;width:1px;height:23px;background:#bdf0d6;"></div>
<div class="r" style="left:244px;top:562px;width:13px;height:13px;background:#fafefc;border:1px solid #6a9a80;box-sizing:border-box;"></div>
<svg class="r" style="left:244px;top:562px;width:13px;height:13px" viewBox="0 0 13 13"><polyline points="2.5,6.5 5,9.3 10.5,3.2" fill="none" stroke="#a0a0a0" stroke-width="1.3"/></svg>
<div class="t" style="left:277.00px;top:562.84px;font-size:12px;line-height:12px;color:#3f8e64;transform:scaleX(0.9700);transform-origin:0 0;">lk2</div>
<div class="t" style="left:336.40px;top:562.84px;font-size:12px;line-height:12px;color:#3f8e64;transform:scaleX(0.8970);transform-origin:0 0;">0x000000000f880000</div>
<div class="t" style="left:452.19px;top:562.84px;font-size:12px;line-height:12px;color:#3f8e64;transform:scaleX(0.8970);transform-origin:0 0;">0x000000000f8e894f</div>
<div class="t" style="left:563.72px;top:562.84px;font-size:12px;line-height:12px;color:#3f8e64;transform:scaleX(0.9200);transform-origin:0 0;">EMMC_USER</div>
<div class="t" style="left:692.09px;top:562.84px;font-size:12px;line-height:12px;color:#3f8e64;transform:scaleX(0.9501);transform-origin:0 0;">D:\letv\x620\LeEco_X620_Fastboot_Unbrick_Rom_a...</div>
<div class="r" style="left:241px;top:579px;width:738px;height:23px;background:#efefef;border-bottom:1px solid #e4e4e4;box-sizing:border-box;"></div>
<div class="r" style="left:273px;top:579px;width:1px;height:23px;background:#b8b8b8;"></div>
<div class="r" style="left:331px;top:579px;width:1px;height:23px;background:#b8b8b8;"></div>
<div class="r" style="left:446px;top:579px;width:1px;height:23px;background:#b8b8b8;"></div>
<div class="r" style="left:560px;top:579px;width:1px;height:23px;background:#b8b8b8;"></div>
<div class="r" style="left:689px;top:579px;width:1px;height:23px;background:#b8b8b8;"></div>
<div class="r" style="left:244px;top:585px;width:13px;height:13px;background:#f4f4f4;border:1px solid #b4b4b4;box-sizing:border-box;"></div>
<div class="t" style="left:277.00px;top:585.84px;font-size:12px;line-height:12px;color:#555555;transform:scaleX(0.9700);transform-origin:0 0;">boot</div>
<div class="t" style="left:336.40px;top:585.84px;font-size:12px;line-height:12px;color:#555555;transform:scaleX(0.8970);transform-origin:0 0;">0x000000000f900000</div>
<div class="t" style="left:455.48px;top:585.84px;font-size:12px;line-height:12px;color:#555555;transform:scaleX(0.8970);transform-origin:0 0;">0x000000001030ffff</div>
<div class="t" style="left:563.72px;top:585.84px;font-size:12px;line-height:12px;color:#555555;transform:scaleX(0.9200);transform-origin:0 0;">EMMC_USER</div>
<div class="t" style="left:692.09px;top:585.84px;font-size:12px;line-height:12px;color:#555555;transform:scaleX(0.9501);transform-origin:0 0;">D:\letv\x620\LeEco_X620_Fastboot_Unbrick_Rom_a...</div>
<div class="r" style="left:241px;top:602px;width:738px;height:23px;background:#52aa7d;border-bottom:1px solid #c4f0da;box-sizing:border-box;"></div>
<div class="r" style="left:273px;top:602px;width:1px;height:23px;background:#bdf0d6;"></div>
<div class="r" style="left:331px;top:602px;width:1px;height:23px;background:#bdf0d6;"></div>
<div class="r" style="left:446px;top:602px;width:1px;height:23px;background:#bdf0d6;"></div>
<div class="r" style="left:560px;top:602px;width:1px;height:23px;background:#bdf0d6;"></div>
<div class="r" style="left:689px;top:602px;width:1px;height:23px;background:#bdf0d6;"></div>
<div class="r" style="left:244px;top:608px;width:13px;height:13px;background:#fafefc;border:1px solid #6a9a80;box-sizing:border-box;"></div>
<svg class="r" style="left:244px;top:608px;width:13px;height:13px" viewBox="0 0 13 13"><polyline points="2.5,6.5 5,9.3 10.5,3.2" fill="none" stroke="#a0a0a0" stroke-width="1.3"/></svg>
<div class="t" style="left:277.00px;top:608.84px;font-size:12px;line-height:12px;color:#3f8e64;transform:scaleX(0.9700);transform-origin:0 0;">logo</div>
<div class="t" style="left:334.90px;top:608.84px;font-size:12px;line-height:12px;color:#3f8e64;transform:scaleX(0.8970);transform-origin:0 0;">0x0000000010900000</div>
<div class="t" style="left:452.19px;top:608.84px;font-size:12px;line-height:12px;color:#3f8e64;transform:scaleX(0.8970);transform-origin:0 0;">0x0000000010a3f23f</div>
<div class="t" style="left:563.72px;top:608.84px;font-size:12px;line-height:12px;color:#3f8e64;transform:scaleX(0.9200);transform-origin:0 0;">EMMC_USER</div>
<div class="t" style="left:692.09px;top:608.84px;font-size:12px;line-height:12px;color:#3f8e64;transform:scaleX(0.9501);transform-origin:0 0;">D:\letv\x620\LeEco_X620_Fastboot_Unbrick_Rom_a...</div>
<div class="r" style="left:241px;top:625px;width:738px;height:23px;background:#efefef;border-bottom:1px solid #e4e4e4;box-sizing:border-box;"></div>
<div class="r" style="left:273px;top:625px;width:1px;height:23px;background:#b8b8b8;"></div>
<div class="r" style="left:331px;top:625px;width:1px;height:23px;background:#b8b8b8;"></div>
<div class="r" style="left:446px;top:625px;width:1px;height:23px;background:#b8b8b8;"></div>
<div class="r" style="left:560px;top:625px;width:1px;height:23px;background:#b8b8b8;"></div>
<div class="r" style="left:689px;top:625px;width:1px;height:23px;background:#b8b8b8;"></div>
<div class="r" style="left:244px;top:631px;width:13px;height:13px;background:#f4f4f4;border:1px solid #b4b4b4;box-sizing:border-box;"></div>
<svg class="r" style="left:244px;top:631px;width:13px;height:13px" viewBox="0 0 13 13"><polyline points="2.5,6.5 5,9.3 10.5,3.2" fill="none" stroke="#a0a0a0" stroke-width="1.3"/></svg>
<div class="t" style="left:277.58px;top:631.84px;font-size:12px;line-height:12px;color:#555555;transform:scaleX(0.9700);transform-origin:0 0;">tee1</div>
<div class="t" style="left:335.70px;top:631.84px;font-size:12px;line-height:12px;color:#555555;transform:scaleX(0.8970);transform-origin:0 0;">0x0000000011100000</div>
<div class="t" style="left:451.49px;top:631.84px;font-size:12px;line-height:12px;color:#555555;transform:scaleX(0.8970);transform-origin:0 0;">0x0000000011174e9f</div>
<div class="t" style="left:563.72px;top:631.84px;font-size:12px;line-height:12px;color:#555555;transform:scaleX(0.9200);transform-origin:0 0;">EMMC_USER</div>
<div class="t" style="left:692.09px;top:631.84px;font-size:12px;line-height:12px;color:#555555;transform:scaleX(0.9501);transform-origin:0 0;">D:\letv\x620\LeEco_X620_Fastboot_Unbrick_Rom_a...</div>
<div class="r" style="left:241px;top:648px;width:738px;height:23px;background:#52aa7d;border-bottom:1px solid #c4f0da;box-sizing:border-box;"></div>
<div class="r" style="left:273px;top:648px;width:1px;height:23px;background:#bdf0d6;"></div>
<div class="r" style="left:331px;top:648px;width:1px;height:23px;background:#bdf0d6;"></div>
<div class="r" style="left:446px;top:648px;width:1px;height:23px;background:#bdf0d6;"></div>
<div class="r" style="left:560px;top:648px;width:1px;height:23px;background:#bdf0d6;"></div>
<div class="r" style="left:689px;top:648px;width:1px;height:23px;background:#bdf0d6;"></div>
<div class="r" style="left:244px;top:654px;width:13px;height:13px;background:#fafefc;border:1px solid #6a9a80;box-sizing:border-box;"></div>
<svg class="r" style="left:244px;top:654px;width:13px;height:13px" viewBox="0 0 13 13"><polyline points="2.5,6.5 5,9.3 10.5,3.2" fill="none" stroke="#a0a0a0" stroke-width="1.3"/></svg>
<div class="t" style="left:277.58px;top:654.84px;font-size:12px;line-height:12px;color:#3f8e64;transform:scaleX(0.9700);transform-origin:0 0;">tee2</div>
<div class="t" style="left:335.33px;top:654.84px;font-size:12px;line-height:12px;color:#3f8e64;transform:scaleX(0.8970);transform-origin:0 0;">0x0000000011600000</div>
<div class="t" style="left:451.12px;top:654.84px;font-size:12px;line-height:12px;color:#3f8e64;transform:scaleX(0.8970);transform-origin:0 0;">0x0000000011674e9f</div>
<div class="t" style="left:563.72px;top:654.84px;font-size:12px;line-height:12px;color:#3f8e64;transform:scaleX(0.9200);transform-origin:0 0;">EMMC_USER</div>
<div class="t" style="left:692.09px;top:654.84px;font-size:12px;line-height:12px;color:#3f8e64;transform:scaleX(0.9501);transform-origin:0 0;">D:\letv\x620\LeEco_X620_Fastboot_Unbrick_Rom_a...</div>
<div class="r" style="left:241px;top:671px;width:738px;height:23px;background:#efefef;border-bottom:1px solid #e4e4e4;box-sizing:border-box;"></div>
<div class="r" style="left:273px;top:671px;width:1px;height:23px;background:#b8b8b8;"></div>
<div class="r" style="left:331px;top:671px;width:1px;height:23px;background:#b8b8b8;"></div>
<div class="r" style="left:446px;top:671px;width:1px;height:23px;background:#b8b8b8;"></div>
<div class="r" style="left:560px;top:671px;width:1px;height:23px;background:#b8b8b8;"></div>
<div class="r" style="left:689px;top:671px;width:1px;height:23px;background:#b8b8b8;"></div>
<div class="r" style="left:244px;top:677px;width:13px;height:13px;background:#f4f4f4;border:1px solid #b4b4b4;box-sizing:border-box;"></div>
<svg class="r" style="left:244px;top:677px;width:13px;height:13px" viewBox="0 0 13 13"><polyline points="2.5,6.5 5,9.3 10.5,3.2" fill="none" stroke="#a0a0a0" stroke-width="1.3"/></svg>
<div class="t" style="left:277.35px;top:677.84px;font-size:12px;line-height:12px;color:#555555;transform:scaleX(0.9700);transform-origin:0 0;">system</div>
<div class="t" style="left:334.90px;top:677.84px;font-size:12px;line-height:12px;color:#555555;transform:scaleX(0.8970);transform-origin:0 0;">0x0000000012800000</div>
<div class="t" style="left:451.28px;top:677.84px;font-size:12px;line-height:12px;color:#555555;transform:scaleX(0.8970);transform-origin:0 0;">0x000000008fc08913</div>
<div class="t" style="left:563.72px;top:677.84px;font-size:12px;line-height:12px;color:#555555;transform:scaleX(0.9200);transform-origin:0 0;">EMMC_USER</div>
<div class="t" style="left:692.09px;top:677.84px;font-size:12px;line-height:12px;color:#555555;transform:scaleX(0.9501);transform-origin:0 0;">D:\letv\x620\LeEco_X620_Fastboot_Unbrick_Rom_a...</div>
<div class="r" style="left:241px;top:694px;width:738px;height:23px;background:#52aa7d;border-bottom:1px solid #c4f0da;box-sizing:border-box;"></div>
<div class="r" style="left:273px;top:694px;width:1px;height:23px;background:#bdf0d6;"></div>
<div class="r" style="left:331px;top:694px;width:1px;height:23px;background:#bdf0d6;"></div>
<div class="r" style="left:446px;top:694px;width:1px;height:23px;background:#bdf0d6;"></div>
<div class="r" style="left:560px;top:694px;width:1px;height:23px;background:#bdf0d6;"></div>
<div class="r" style="left:689px;top:694px;width:1px;height:23px;background:#bdf0d6;"></div>
<div class="r" style="left:244px;top:700px;width:13px;height:13px;background:#fafefc;border:1px solid #6a9a80;box-sizing:border-box;"></div>
<svg class="r" style="left:244px;top:700px;width:13px;height:13px" viewBox="0 0 13 13"><polyline points="2.5,6.5 5,9.3 10.5,3.2" fill="none" stroke="#a0a0a0" stroke-width="1.3"/></svg>
<div class="t" style="left:277.23px;top:700.84px;font-size:12px;line-height:12px;color:#3f8e64;transform:scaleX(0.9700);transform-origin:0 0;">cache</div>
<div class="t" style="left:335.33px;top:700.84px;font-size:12px;line-height:12px;color:#3f8e64;transform:scaleX(0.8970);transform-origin:0 0;">0x0000000112800000</div>
<div class="t" style="left:451.12px;top:700.84px;font-size:12px;line-height:12px;color:#3f8e64;transform:scaleX(0.8970);transform-origin:0 0;">0x00000001130a012f</div>
<div class="t" style="left:563.72px;top:700.84px;font-size:12px;line-height:12px;color:#3f8e64;transform:scaleX(0.9200);transform-origin:0 0;">EMMC_USER</div>
<div class="t" style="left:692.09px;top:700.84px;font-size:12px;line-height:12px;color:#3f8e64;transform:scaleX(0.9501);transform-origin:0 0;">D:\letv\x620\LeEco_X620_Fastboot_Unbrick_Rom_a...</div>
<div class="r" style="left:241px;top:717px;width:738px;height:23px;background:#efefef;border-bottom:1px solid #e4e4e4;box-sizing:border-box;"></div>
<div class="r" style="left:273px;top:717px;width:1px;height:23px;background:#b8b8b8;"></div>
<div class="r" style="left:331px;top:717px;width:1px;height:23px;background:#b8b8b8;"></div>
<div class="r" style="left:446px;top:717px;width:1px;height:23px;background:#b8b8b8;"></div>
<div class="r" style="left:560px;top:717px;width:1px;height:23px;background:#b8b8b8;"></div>
<div class="r" style="left:689px;top:717px;width:1px;height:23px;background:#b8b8b8;"></div>
<div class="r" style="left:244px;top:723px;width:13px;height:13px;background:#f4f4f4;border:1px solid #b4b4b4;box-sizing:border-box;"></div>
<svg class="r" style="left:244px;top:723px;width:13px;height:13px" viewBox="0 0 13 13"><polyline points="2.5,6.5 5,9.3 10.5,3.2" fill="none" stroke="#a0a0a0" stroke-width="1.3"/></svg>
<div class="t" style="left:277.00px;top:723.84px;font-size:12px;line-height:12px;color:#555555;transform:scaleX(0.9700);transform-origin:0 0;">userdata</div>
<div class="t" style="left:334.90px;top:723.84px;font-size:12px;line-height:12px;color:#555555;transform:scaleX(0.8970);transform-origin:0 0;">0x000000012d800000</div>
<div class="t" style="left:452.19px;top:723.84px;font-size:12px;line-height:12px;color:#555555;transform:scaleX(0.8970);transform-origin:0 0;">0x0000000130afe36f</div>
<div class="t" style="left:563.72px;top:723.84px;font-size:12px;line-height:12px;color:#555555;transform:scaleX(0.9200);transform-origin:0 0;">EMMC_USER</div>
<div class="t" style="left:692.09px;top:723.84px;font-size:12px;line-height:12px;color:#555555;transform:scaleX(0.9501);transform-origin:0 0;">D:\letv\x620\LeEco_X620_Fastboot_Unbrick_Rom_a...</div>
<div class="r" style="left:241px;top:740px;width:738px;height:1px;background:#b4b4b4;"></div>
<div class="r" style="left:221px;top:860px;width:796px;height:19px;background:#ffffff;border-top:1px solid #b8b8b8;box-sizing:border-box;"></div>
<div class="r" style="left:222px;top:861px;width:437px;height:17px;background:#ffff00;"></div>
<div class="t" style="left:567.33px;top:863.64px;font-size:12px;line-height:12px;color:#1a1a1a;transform:scaleX(0.9029);transform-origin:0 0;">Download Flash 55%</div>
<div class="r" style="left:221px;top:879px;width:796px;height:14px;background:#f0f0f0;border-top:1px solid #a8a8a8;box-sizing:border-box;"></div>
<div class="r" style="left:221px;top:879px;width:1px;height:14px;background:#a0a0a0;"></div>
<div class="r" style="left:321px;top:879px;width:1px;height:14px;background:#a0a0a0;"></div>
<div class="r" style="left:421px;top:879px;width:1px;height:14px;background:#a0a0a0;"></div>
<div class="r" style="left:481px;top:879px;width:1px;height:14px;background:#a0a0a0;"></div>
<div class="r" style="left:531px;top:879px;width:1px;height:14px;background:#a0a0a0;"></div>
<div class="r" style="left:631px;top:879px;width:1px;height:14px;background:#a0a0a0;"></div>
<div class="r" style="left:721px;top:879px;width:1px;height:14px;background:#a0a0a0;"></div>
<div class="r" style="left:1016px;top:879px;width:1px;height:14px;background:#e0e0e0;"></div>
<div class="t" style="left:271.75px;top:880.84px;font-size:12px;line-height:12px;color:#1a1a1a;transform:scaleX(0.9098);transform-origin:0 0;">24.67M/s</div>
<div class="t" style="left:387.75px;top:880.84px;font-size:12px;line-height:12px;color:#1a1a1a;transform:scaleX(0.8912);transform-origin:0 0;">1.07G</div>
<div class="t" style="left:488.64px;top:880.84px;font-size:12px;line-height:12px;color:#1a1a1a;transform:scaleX(0.9150);transform-origin:0 0;font-weight:bold;">EMMC</div>
<div class="t" style="left:552.46px;top:880.84px;font-size:12px;line-height:12px;color:#1a1a1a;transform:scaleX(0.8793);transform-origin:0 0;">High Speed</div>
<div class="t" style="left:663.52px;top:880.84px;font-size:12px;line-height:12px;color:#1a1a1a;transform:scaleX(1.0036);transform-origin:0 0;">0:56</div>
<div class="t" style="left:722.16px;top:880.84px;font-size:12px;line-height:12px;color:#1a1a1a;transform:scaleX(0.8731);transform-origin:0 0;">MediaTek PreLoader USB VCOM (Android) (COM43)</div>
</body></html>
